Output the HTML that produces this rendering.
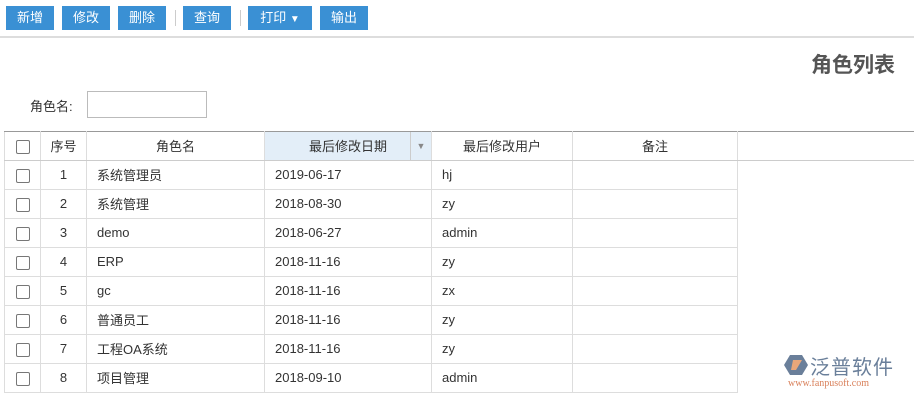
<!DOCTYPE html>
<html><head><meta charset="utf-8"><style>
*{margin:0;padding:0;box-sizing:border-box}
body{width:914px;height:400px;overflow:hidden;background:#fff;font-family:"Liberation Sans","Noto Sans CJK SC",sans-serif;font-size:13px;color:#333;position:relative}
.btn{position:absolute;top:6px;height:24px;background:#3a90d4;color:#fff;font-size:13px;line-height:24px;text-align:center}
.sep{position:absolute;top:10px;width:1px;height:16px;background:#ccc}
.hl{position:absolute;left:0;top:36px;width:914px;height:2px;background:#ddd}
.title{position:absolute;right:19px;top:49px;font-size:21px;font-weight:bold;color:#555}
.lbl{position:absolute;left:30px;top:96px;font-size:13px}
.inp{position:absolute;left:87px;top:91px;width:120px;height:27px;border:1px solid #bbb}
table{position:absolute;left:4px;top:131px;border-collapse:collapse}
td{height:29px;border:1px solid #ddd;padding:0 10px;font-size:13px;white-space:nowrap;line-height:28px;vertical-align:middle}
td span.t{display:inline-block;line-height:16px;height:16px;vertical-align:middle}
thead td{text-align:center;border-top:1px solid #999;border-bottom:1px solid #ccc}
.cb{display:inline-block;width:14px;height:14px;border:1px solid #777;border-radius:2px;vertical-align:middle}
.c0{width:36px;text-align:center;padding:0}
.c1{width:46px;text-align:center;padding:0}
.c2{width:178px}
.c3{width:167px}
.c4{width:141px}
.c5{width:165px}
</style></head><body>
<div class="btn" style="left:6px;width:48px">新增</div>
<div class="btn" style="left:62px;width:48px">修改</div>
<div class="btn" style="left:118px;width:48px">删除</div>
<div class="sep" style="left:175px"></div>
<div class="btn" style="left:183px;width:48px">查询</div>
<div class="sep" style="left:240px"></div>
<div class="btn" style="left:248px;width:64px">打印 <span style="font-size:10px">▼</span></div>
<div class="btn" style="left:320px;width:48px">输出</div>
<div class="hl"></div>
<div class="title">角色列表</div>
<div class="lbl">角色名:</div>
<div class="inp"></div>
<div style="position:absolute;left:737px;top:131px;width:177px;height:30px;border-top:1px solid #999;border-bottom:1px solid #ccc"></div>
<table>
<thead><tr><td class="c0"><span class="cb"></span></td><td class="c1"><span class="t">序号</span></td><td class="c2"><span class="t">角色名</span></td><td class="c3" style="background:#e3eef8;position:relative"><span class="t">最后修改日期</span><span style="position:absolute;right:0;top:0;width:21px;height:28px;border-left:1px solid #ccc;color:#888;font-size:9px;line-height:28px">▼</span></td><td class="c4"><span class="t">最后修改用户</span></td><td class="c5"><span class="t">备注</span></td></tr></thead>
<tbody>
<tr><td class="c0"><span class="cb"></span></td><td class="c1">1</td><td><span class="t">系统管理员</span></td><td>2019-06-17</td><td>hj</td><td></td></tr>
<tr><td class="c0"><span class="cb"></span></td><td class="c1">2</td><td><span class="t">系统管理</span></td><td>2018-08-30</td><td>zy</td><td></td></tr>
<tr><td class="c0"><span class="cb"></span></td><td class="c1">3</td><td>demo</td><td>2018-06-27</td><td>admin</td><td></td></tr>
<tr><td class="c0"><span class="cb"></span></td><td class="c1">4</td><td>ERP</td><td>2018-11-16</td><td>zy</td><td></td></tr>
<tr><td class="c0"><span class="cb"></span></td><td class="c1">5</td><td>gc</td><td>2018-11-16</td><td>zx</td><td></td></tr>
<tr><td class="c0"><span class="cb"></span></td><td class="c1">6</td><td><span class="t">普通员工</span></td><td>2018-11-16</td><td>zy</td><td></td></tr>
<tr><td class="c0"><span class="cb"></span></td><td class="c1">7</td><td><span class="t">工程OA系统</span></td><td>2018-11-16</td><td>zy</td><td></td></tr>
<tr><td class="c0"><span class="cb"></span></td><td class="c1">8</td><td><span class="t">项目管理</span></td><td>2018-09-10</td><td>admin</td><td></td></tr>
</tbody></table>
<svg style="position:absolute;left:784px;top:354px" width="24" height="22" viewBox="0 0 24 22"><path d="M6 1h12l6 10-6 10H6L0 11z" fill="#6a7f9a"/><path d="M9 6h9l-6 10H7z" fill="#e9a77a"/></svg>
<div style="position:absolute;left:810px;top:351px;font-size:20px;color:#6a7f9a;letter-spacing:1px">泛普软件</div>
<div style="position:absolute;left:788px;top:378px;font-size:10px;color:#d9805a;font-family:'Liberation Serif',serif">www.fanpusoft.com</div>
</body></html>
